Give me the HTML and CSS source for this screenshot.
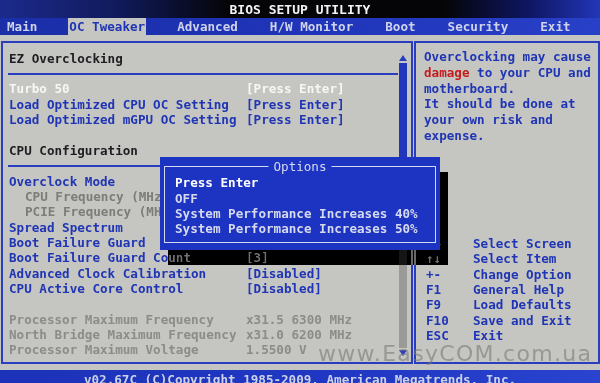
FILE: index.html
```html
<!DOCTYPE html>
<html>
<head>
<meta charset="utf-8">
<title>BIOS SETUP UTILITY</title>
<link rel="stylesheet" href="styles.css">
</head>
<body>
<div class="screen">
  <header class="titlebar">BIOS SETUP UTILITY</header>
  <nav class="menubar">
    <span class="tab">Main</span>
    <span class="tab active">OC Tweaker</span>
    <span class="tab">Advanced</span>
    <span class="tab">H/W Monitor</span>
    <span class="tab">Boot</span>
    <span class="tab">Security</span>
    <span class="tab">Exit</span>
  </nav>
  <main class="main">
    <section class="panel left">
      <div class="list">
        <div class="row head">EZ Overclocking</div>
        <div class="rule"></div>
        <div class="row sel"><span>Turbo 50</span><span>[Press Enter]</span></div>
        <div class="row"><span>Load Optimized CPU OC Setting</span><span>[Press Enter]</span></div>
        <div class="row"><span>Load Optimized mGPU OC Setting</span><span>[Press Enter]</span></div>
        <div class="row"></div>
        <div class="row head">CPU Configuration</div>
        <div class="rule"></div>
        <div class="row"><span>Overclock Mode</span><span></span></div>
        <div class="row dim"><span class="ind">CPU Frequency (MHz)</span><span></span></div>
        <div class="row dim"><span class="ind">PCIE Frequency (MHz)</span><span></span></div>
        <div class="row"><span>Spread Spectrum</span><span></span></div>
        <div class="row"><span>Boot Failure Guard</span><span></span></div>
        <div class="row"><span>Boot Failure Guard Count</span><span>[3]</span></div>
        <div class="row"><span>Advanced Clock Calibration</span><span>[Disabled]</span></div>
        <div class="row"><span>CPU Active Core Control</span><span>[Disabled]</span></div>
        <div class="row"></div>
        <div class="row info"><span>Processor Maximum Frequency</span><span>x31.5 6300 MHz</span></div>
        <div class="row info"><span>North Bridge Maximum Frequency</span><span>x31.0 6200 MHz</span></div>
        <div class="row info"><span>Processor Maximum Voltage</span><span>1.5500 V</span></div>
      </div>
      <div class="scroll">
        <div class="arrow up"></div>
        <div class="thumb"></div>
        <div class="track"></div>
        <div class="arrow down"></div>
      </div>
    </section>
    <aside class="panel right">
      <div class="help">
        <div>Overclocking may cause</div>
        <div><span class="warn">damage</span> to your CPU and</div>
        <div>motherboard.</div>
        <div>It should be done at</div>
        <div>your own risk and</div>
        <div>expense.</div>
      </div>
      <div class="keys">
        <div class="key"><span>→←</span><span>Select Screen</span></div>
        <div class="key"><span>↑↓</span><span>Select Item</span></div>
        <div class="key"><span>+-</span><span>Change Option</span></div>
        <div class="key"><span>F1</span><span>General Help</span></div>
        <div class="key"><span>F9</span><span>Load Defaults</span></div>
        <div class="key"><span>F10</span><span>Save and Exit</span></div>
        <div class="key"><span>ESC</span><span>Exit</span></div>
      </div>
    </aside>
  </main>
  <footer class="footer">v02.67C (C)Copyright 1985-2009, American Megatrends, Inc.</footer>

  <div class="shade"></div>
  <div class="popup">
    <div class="frame"><span class="ptitle">Options</span></div>
    <div class="opts">
      <div class="opt cur">Press Enter</div>
      <div class="opt">OFF</div>
      <div class="opt">System Performance Increases 40%</div>
      <div class="opt">System Performance Increases 50%</div>
    </div>
  </div>
  <div class="watermark">www.EasyCOM.com.ua</div>
</div>
</body>
</html>
```

FILE: styles.css
```css
* { box-sizing: border-box; }

html, body {
  margin: 0;
  padding: 0;
  background: #c5c5c1;
}

.screen {
  position: relative;
  width: 600px;
  height: 383px;
  overflow: hidden;
  background: #c5c5c1;
  font-family: "DejaVu Sans Mono", "Liberation Mono", monospace;
  font-weight: bold;
  font-size: 12.6px;
  color: #1f35b5;
  display: flex;
  flex-direction: column;
}

.titlebar {
  height: 18px;
  flex: none;
  line-height: 20px;
  text-align: center;
  color: #f2f2f2;
  font-size: 13px;
  background: linear-gradient(90deg, #1c2a8c 0%, #101a5a 20%, #050508 38%, #050508 74%, #0e1660 88%, #2236b8 100%);
}

.menubar {
  height: 17px;
  flex: none;
  display: flex;
  gap: 32px;
  padding-left: 7px;
  line-height: 18px;
  color: #cfd3ea;
  background: linear-gradient(90deg, #1a2ea8 0%, #1f34b8 50%, #2840c8 100%);
}

.tab { white-space: pre; }

.tab.active {
  background: #c5c5c1;
  color: #1f35b5;
  margin: 0 -1px;
  padding: 0 1px;
}

.main {
  flex: none;
  height: 334px;
  display: flex;
  gap: 1px;
  padding: 6px 0 0 1px;
  align-items: flex-start;
}

.panel {
  height: 323px;
  border: 2px solid #2a3dbe;
  flex: none;
}

.panel.left {
  width: 412px;
  display: flex;
  padding-left: 5px;
}

.list {
  width: 390px;
  padding-top: 7.8px;
}

.row {
  display: grid;
  grid-template-columns: 237px auto;
  height: 15.35px;
  line-height: 15.35px;
  padding-left: 1px;
  white-space: pre;
}

.row.head { color: #1d1d22; }
.row.sel { color: #f6f6f6; }
.row.dim { color: #7c7c78; }
.row.info { color: #8c8c88; }
.ind { padding-left: 16px; }

.rule {
  height: 15.35px;
  display: flex;
  align-items: center;
}

.rule::before {
  content: "";
  display: block;
  width: 100%;
  height: 2px;
  background: #2a3dbe;
}

.scroll {
  width: 8px;
  margin-left: 1px;
  display: flex;
  flex-direction: column;
  align-items: center;
  padding-top: 12px;
  padding-bottom: 6px;
}

.arrow {
  width: 0;
  height: 0;
  border-left: 4px solid transparent;
  border-right: 4px solid transparent;
}

.arrow.up { border-bottom: 6px solid #2a3dbe; }
.arrow.down { border-top: 6px solid #2a3dbe; margin-top: 2px; }

.thumb {
  width: 8px;
  height: 150px;
  margin-top: 2px;
  background: #2236bc;
}

.track {
  width: 8px;
  flex: 1;
  background: #9a9a96;
}

.panel.right {
  width: 186px;
  display: flex;
  flex-direction: column;
  padding: 6px 0 0 8px;
}

.help > div {
  height: 15.75px;
  line-height: 15.75px;
  white-space: pre;
}

.warn { color: #c41c1c; }

.keys {
  margin-top: auto;
  padding-bottom: 18.5px;
  padding-left: 2px;
}

.key {
  display: grid;
  grid-template-columns: 47px auto;
  height: 15.35px;
  line-height: 15.35px;
  white-space: pre;
}

.footer {
  flex: none;
  height: 14px;
  margin-top: 1px;
  overflow: hidden;
  padding-top: 2px;
  line-height: 15.35px;
  text-align: center;
  color: #cdd1e8;
  background: linear-gradient(90deg, #1c32b8 0%, #2038c4 60%, #2a44d0 100%);
}

/* popup + its drop shadow */
.shade {
  position: absolute;
  left: 168px;
  top: 172px;
  width: 280px;
  height: 93px;
  backdrop-filter: grayscale(1) invert(1) brightness(0.6) contrast(1.6);
}

.popup {
  position: absolute;
  left: 160px;
  top: 157px;
  width: 280px;
  height: 93px;
  background: #1d33c2;
  color: #d6daee;
}

.frame {
  position: absolute;
  top: 9px;
  left: 4px;
  right: 4px;
  bottom: 7px;
  border: 1px solid #d4d8ee;
}

.ptitle {
  position: absolute;
  top: -9px;
  left: 50%;
  transform: translateX(-50%);
  padding: 0 5px;
  line-height: 17px;
  background: #1d33c2;
  font-weight: normal;
  color: #d6daee;
}

.opts {
  position: relative;
  padding: 18.3px 0 0 15px;
}

.opt {
  height: 15.35px;
  line-height: 15.35px;
  white-space: pre;
}

.opt.cur { color: #ffffff; }

.watermark {
  position: absolute;
  left: 318px;
  top: 344px;
  line-height: 20px;
  font-family: "DejaVu Sans", sans-serif;
  font-weight: normal;
  font-size: 22px;
  letter-spacing: 1.3px;
  color: rgba(120, 120, 118, 0.6);
}
```
